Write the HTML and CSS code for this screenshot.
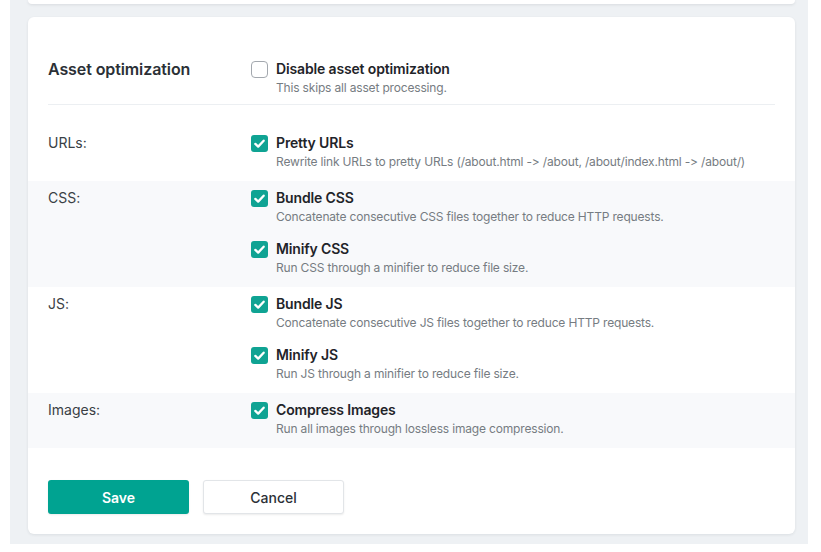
FILE: index.html
```html
<!DOCTYPE html>
<html lang="en">
<head>
<meta charset="utf-8">
<title>Asset optimization</title>
<link rel="stylesheet" href="styles.css">
</head>
<body>
<div class="page">
  <div class="prev-card"></div>
  <div class="card">
    <div class="header">
      <div class="section-title">Asset optimization</div>
      <div class="items">
        <label class="item">
          <span class="cb"></span>
          <span class="text">
            <span class="name">Disable asset optimization</span>
            <span class="desc">This skips all asset processing.</span>
          </span>
        </label>
      </div>
    </div>

    <div class="row first">
      <div class="row-label">URLs:</div>
      <div class="items">
        <label class="item">
          <span class="cb checked"><svg viewBox="0 0 18 18"><path d="M4.6 9.4l3 2.9 5.8-6.3" /></svg></span>
          <span class="text">
            <span class="name">Pretty URLs</span>
            <span class="desc">Rewrite link URLs to pretty URLs (/about.html -&gt; /about, /about/index.html -&gt; /about/)</span>
          </span>
        </label>
      </div>
    </div>

    <div class="row alt">
      <div class="row-label">CSS:</div>
      <div class="items">
        <label class="item">
          <span class="cb checked"><svg viewBox="0 0 18 18"><path d="M4.6 9.4l3 2.9 5.8-6.3" /></svg></span>
          <span class="text">
            <span class="name">Bundle CSS</span>
            <span class="desc">Concatenate consecutive CSS files together to reduce HTTP requests.</span>
          </span>
        </label>
        <label class="item">
          <span class="cb checked"><svg viewBox="0 0 18 18"><path d="M4.6 9.4l3 2.9 5.8-6.3" /></svg></span>
          <span class="text">
            <span class="name">Minify CSS</span>
            <span class="desc">Run CSS through a minifier to reduce file size.</span>
          </span>
        </label>
      </div>
    </div>

    <div class="row">
      <div class="row-label">JS:</div>
      <div class="items">
        <label class="item">
          <span class="cb checked"><svg viewBox="0 0 18 18"><path d="M4.6 9.4l3 2.9 5.8-6.3" /></svg></span>
          <span class="text">
            <span class="name">Bundle JS</span>
            <span class="desc">Concatenate consecutive JS files together to reduce HTTP requests.</span>
          </span>
        </label>
        <label class="item">
          <span class="cb checked"><svg viewBox="0 0 18 18"><path d="M4.6 9.4l3 2.9 5.8-6.3" /></svg></span>
          <span class="text">
            <span class="name">Minify JS</span>
            <span class="desc">Run JS through a minifier to reduce file size.</span>
          </span>
        </label>
      </div>
    </div>

    <div class="row alt">
      <div class="row-label">Images:</div>
      <div class="items">
        <label class="item">
          <span class="cb checked"><svg viewBox="0 0 18 18"><path d="M4.6 9.4l3 2.9 5.8-6.3" /></svg></span>
          <span class="text">
            <span class="name">Compress Images</span>
            <span class="desc">Run all images through lossless image compression.</span>
          </span>
        </label>
      </div>
    </div>

    <div class="actions">
      <button class="btn btn-primary">Save</button>
      <button class="btn btn-secondary">Cancel</button>
    </div>
  </div>
</div>
</body>
</html>
```
FILE: styles.css
```css
* { box-sizing: border-box; }

html, body {
  margin: 0;
  padding: 0;
  background: #ffffff;
}

body {
  font-family: Inter, "Noto Sans", "Liberation Sans", sans-serif;
  font-feature-settings: "calt" 0, "liga" 0;
  font-variant-ligatures: none;
  color: #2b3036;
  -webkit-font-smoothing: antialiased;
}

.page {
  margin-left: 10px;
  width: 798px;
  height: 544px;
  background: #eef1f4;
  padding: 0 13px 0 18px;
}

.prev-card {
  height: 4px;
  background: #ffffff;
  border-radius: 0 0 5px 5px;
  box-shadow: 0 1px 3px rgba(30, 40, 50, 0.10);
  margin-bottom: 13px;
}

.card {
  background: #ffffff;
  border-radius: 6px;
  box-shadow: 0 1px 3px rgba(30, 40, 50, 0.09);
  height: 517px;
  padding-top: 43px;
}

.header {
  display: flex;
  margin: 0 20px;
  padding-bottom: 8px;
  border-bottom: 1px solid #eceff2;
}

.section-title {
  width: 203px;
  flex: none;
  font-size: 16px;
  font-weight: 600;
  line-height: 18px;
  letter-spacing: -0.1px;
  color: #2b3036;
}

.row {
  display: flex;
  padding: 8px 20px 11px;
}

.row.first {
  margin-top: 21px;
}

.row.alt {
  background: #f8f9fb;
}

.row-label {
  width: 203px;
  flex: none;
  font-size: 14px;
  line-height: 18px;
  color: #3a3f45;
}

.items {
  display: flex;
  flex-direction: column;
  gap: 15px;
}

.item {
  display: flex;
  align-items: flex-start;
  gap: 8px;
}

.cb {
  flex: none;
  width: 17px;
  height: 17px;
  margin-top: 1px;
  border: 1.5px solid #a3a8ae;
  border-radius: 4px;
  background: #ffffff;
  display: flex;
  align-items: center;
  justify-content: center;
}

.cb.checked {
  border: none;
  border-radius: 3px;
  background: #0fa393;
}

.cb svg {
  width: 17px;
  height: 17px;
}

.cb svg path {
  fill: none;
  stroke: #ffffff;
  stroke-width: 2.4;
  stroke-linecap: round;
  stroke-linejoin: round;
}

.text {
  display: flex;
  flex-direction: column;
}

.name {
  font-size: 14px;
  font-weight: 600;
  line-height: 18px;
  letter-spacing: -0.15px;
  color: #1f2429;
}

.desc {
  margin-top: 2px;
  font-size: 12px;
  line-height: 16px;
  letter-spacing: -0.17px;
  color: #767c82;
}

.actions {
  display: flex;
  gap: 14px;
  margin: 32px 20px 0;
}

.btn {
  width: 141px;
  height: 34px;
  border-radius: 3px;
  font-family: Inter, "Noto Sans", "Liberation Sans", sans-serif;
  font-size: 14px;
  cursor: pointer;
}

.btn-primary {
  background: #00a391;
  color: #ffffff;
  font-weight: 600;
  border: none;
  box-shadow: 0 1px 2px rgba(0, 0, 0, 0.08);
}

.btn-secondary {
  background: #ffffff;
  color: #2b3036;
  font-weight: 500;
  border: 1px solid #e2e5e8;
  box-shadow: 0 1px 2px rgba(0, 0, 0, 0.08);
}
```
